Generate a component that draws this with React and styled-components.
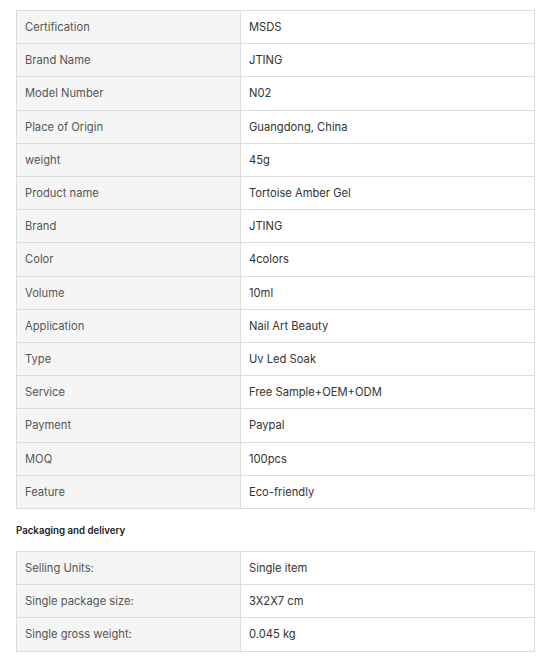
import React from "react";
import styled, { createGlobalStyle } from "styled-components";

const Global = createGlobalStyle`
  body { margin: 0; background: #fff; font-family: Inter, "Noto Sans", Arial, sans-serif; }
`;

const Page = styled.div`
  padding: 10px 16px 0 16px;
  width: 519px;
`;

const Table = styled.table`
  width: 519px;
  border-collapse: collapse;
  table-layout: fixed;
  font-size: 11.2px;
`;

const Cell = styled.td`
  border: 1px solid #dcdcdc;
  padding: 8px 8px;
  line-height: 16.2px;
  color: ${(p) => (p.$label ? "#555" : "#333")};
  background: ${(p) => (p.$label ? "#f5f5f5" : "#fff")};
  width: ${(p) => (p.$label ? "207px" : "auto")};
  vertical-align: middle;
  white-space: nowrap;
`;

const Heading = styled.div`
  font-size: 9.7px;
  font-weight: 600;
  color: #222;
  line-height: 14px;
  margin: 14.5px 0 13.5px 0;
`;

const specs = [
  ["Certification", "MSDS"],
  ["Brand Name", "JTING"],
  ["Model Number", "N02"],
  ["Place of Origin", "Guangdong, China"],
  ["weight", "45g"],
  ["Product name", "Tortoise Amber Gel"],
  ["Brand", "JTING"],
  ["Color", "4colors"],
  ["Volume", "10ml"],
  ["Application", "Nail Art Beauty"],
  ["Type", "Uv Led Soak"],
  ["Service", "Free Sample+OEM+ODM"],
  ["Payment", "Paypal"],
  ["MOQ", "100pcs"],
  ["Feature", "Eco-friendly"],
];

const packaging = [
  ["Selling Units:", "Single item"],
  ["Single package size:", "3X2X7 cm"],
  ["Single gross weight:", "0.045 kg"],
];

function SpecTable({ rows }) {
  return (
    <Table>
      <tbody>
        {rows.map(([k, v]) => (
          <tr key={k}>
            <Cell $label>{k}</Cell>
            <Cell>{v}</Cell>
          </tr>
        ))}
      </tbody>
    </Table>
  );
}

export default function App() {
  return (
    <>
      <Global />
      <Page>
        <SpecTable rows={specs} />
        <Heading>Packaging and delivery</Heading>
        <SpecTable rows={packaging} />
      </Page>
    </>
  );
}
